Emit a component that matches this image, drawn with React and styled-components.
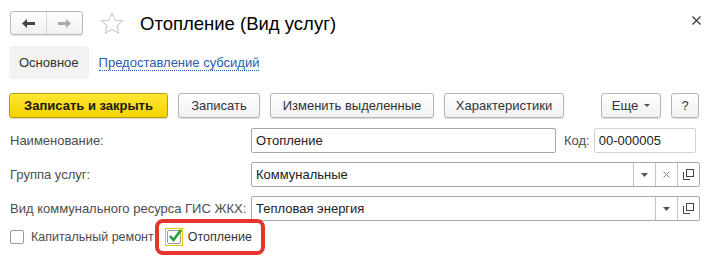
import React from 'react'
import styled, { createGlobalStyle } from 'styled-components'

const Global = createGlobalStyle`
  body {
    margin: 0;
    background: #fff;
    font-family: "Liberation Sans", Arial, sans-serif;
    font-size: 13px;
    color: #4d4d4d;
  }
`
const Page = styled.div`
  width: 717px;
  height: 277px;
  box-sizing: border-box;
  padding: 11px 17px 0 9px;
  display: flex;
  flex-direction: column;
`
const Header = styled.div`
  display: flex;
  align-items: center;
  height: 24px;
`
const NavGroup = styled.div`
  display: flex;
  width: 73px;
  height: 24px;
  box-sizing: border-box;
  border: 1px solid #b9b9b9;
  border-radius: 3px;
  background: linear-gradient(#ffffff, #f1f1f1);
  box-shadow: 0 1px 1px rgba(0, 0, 0, 0.12);
  margin-left: 1px;
`
const NavButton = styled.div`
  flex: 1;
  display: flex;
  align-items: center;
  justify-content: center;
  & + & {
    border-left: 1px solid #d6d6d6;
  }
`
const Star = styled.div`
  margin-left: 17px;
  display: flex;
`
const Title = styled.h1`
  margin: 0 0 0 16px;
  font-size: 18.5px;
  font-weight: normal;
  color: #000;
  flex: 1;
  line-height: 24px;
  padding-top: 2px;
`
const Close = styled.div`
  display: flex;
  margin-top: -6px;
  margin-right: -1px;
`
const Tabs = styled.div`
  display: flex;
  align-items: center;
  margin-top: 11px;
  height: 33px;
`
const ActiveTab = styled.div`
  height: 33px;
  padding: 0 10px;
  display: flex;
  align-items: center;
  background: #f2f2f2;
  border-radius: 3px;
  color: #333;
`
const TabLink = styled.a`
  margin-left: 10px;
  color: #2a5cad;
  text-decoration: none;
  border-bottom: 1px dotted #2a5cad;
  line-height: 14px;
  margin-top: 2px;
`
const Toolbar = styled.div`
  display: flex;
  margin-top: 14px;
  height: 25px;
`
const Button = styled.div`
  height: 25px;
  box-sizing: border-box;
  margin-right: ${(p) => p.$gap ?? 10}px;
  display: flex;
  align-items: center;
  justify-content: center;
  border-radius: 3px;
  border: 1px solid ${(p) => (p.$primary ? '#b59f00' : '#b5b5b5')};
  background: ${(p) =>
    p.$primary
      ? 'linear-gradient(#ffe733, #f5d200)'
      : 'linear-gradient(#ffffff, #f0f0f0)'};
  box-shadow: 0 1px 1px rgba(0, 0, 0, 0.15);
  color: ${(p) => (p.$primary ? '#1a1a1a' : '#333')};
  font-weight: ${(p) => (p.$primary ? 'bold' : 'normal')};
  width: ${(p) => p.$w}px;
  white-space: nowrap;
`
const Caret = styled.span`
  margin-left: 6px;
  width: 0;
  height: 0;
  border-left: 3px solid transparent;
  border-right: 3px solid transparent;
  border-top: 3px solid #555;
`
const Form = styled.div`
  margin-top: 10px;
  display: flex;
  flex-direction: column;
  gap: 9px;
`
const Row = styled.div`
  display: flex;
  align-items: center;
  height: 25px;
`
const Label = styled.div`
  width: 241px;
  flex: none;
  white-space: nowrap;
  padding-left: 1px;
`
const Field = styled.div`
  display: flex;
  align-items: stretch;
  height: 25px;
  box-sizing: border-box;
  width: ${(p) => p.$w}px;
  border: 1px solid ${(p) => (p.$light ? '#d2d2d2' : '#a8a8a8')};
  border-radius: 2px;
  background: #fff;
  color: #222;
`
const Value = styled.div`
  flex: 1;
  display: flex;
  align-items: center;
  padding-left: 4px;
`
const FieldButton = styled.div`
  width: 21px;
  display: flex;
  align-items: center;
  justify-content: center;
  border-left: 1px solid #c4c4c4;
`
const CodeLabel = styled.div`
  margin: 0 4px 0 8px;
`
const CheckRow = styled.div`
  display: flex;
  align-items: center;
  margin-top: -2px;
  height: 36px;
`
const Box = styled.div`
  width: 14px;
  height: 14px;
  box-sizing: border-box;
  border: 1px solid #9a9a9a;
  border-radius: 2px;
  background: #fff;
  margin-left: 1px;
`
const CheckLabel = styled.div`
  margin-left: ${(p) => p.$gap ?? 7}px;
  font-size: 12.5px;
`
const Highlight = styled.div`
  height: 36px;
  box-sizing: border-box;
  border: 4px solid #e2362c;
  border-radius: 8px;
  display: flex;
  align-items: center;
  padding: 0 9px 0 0;
  margin-left: 1px;
  color: #333;
`
const Focus = styled.div`
  width: 18px;
  height: 18px;
  box-sizing: border-box;
  border: 1px solid #e8c300;
  display: flex;
  align-items: center;
  justify-content: center;
  margin-left: 6px;
  margin-top: -1px;
`
const CheckedBox = styled.div`
  width: 14px;
  height: 14px;
  box-sizing: border-box;
  border: 1px solid #9a9a9a;
  border-radius: 2px;
  position: relative;
`
const Tick = styled.svg`
  position: absolute;
  left: 0px;
  top: -3px;
`

const DropIcon = () => (
  <svg width="7" height="4" viewBox="0 0 7 4">
    <path d="M0 0h7L3.5 4z" fill="#555" />
  </svg>
)
const ClearIcon = () => (
  <svg width="7" height="7" viewBox="0 0 7 7">
    <path d="M0.5 0.5l6 6M6.5 0.5l-6 6" stroke="#888" strokeWidth="1" />
  </svg>
)
const OpenIcon = () => (
  <svg width="11" height="11" viewBox="0 0 11 11">
    <rect x="3.5" y="0.5" width="7" height="7" fill="none" stroke="#444" />
    <path d="M0.5 3v7.5H7" fill="none" stroke="#444" />
  </svg>
)

export default function App() {
  return (
    <>
      <Global />
      <Page>
        <Header>
          <NavGroup>
            <NavButton>
              <svg width="13" height="9" viewBox="0 0 13 9">
                <path d="M0 4.5L5 0v3h8v3H5v3z" fill="#444" />
              </svg>
            </NavButton>
            <NavButton>
              <svg width="13" height="9" viewBox="0 0 13 9">
                <path d="M13 4.5L8 0v3H0v3h8v3z" fill="#aaa" />
              </svg>
            </NavButton>
          </NavGroup>
          <Star>
            <svg width="24" height="23" viewBox="0 0 24 23">
              <path
                d="M12 1l3.1 7.2 7.6.6-5.8 5 1.8 7.5L12 17.3 5.3 21.3l1.8-7.5-5.8-5 7.6-.6z"
                fill="none"
                stroke="#c4c4c4"
                strokeWidth="1"
              />
            </svg>
          </Star>
          <Title>Отопление (Вид услуг)</Title>
          <Close>
            <svg width="9" height="9" viewBox="0 0 9 9">
              <path d="M0.5 0.5l8 8M8.5 0.5l-8 8" stroke="#333" strokeWidth="1.1" />
            </svg>
          </Close>
        </Header>
        <Tabs>
          <ActiveTab>Основное</ActiveTab>
          <TabLink>Предоставление субсидий</TabLink>
        </Tabs>
        <Toolbar>
          <Button $primary $w={159}>Записать и закрыть</Button>
          <Button $w={82}>Записать</Button>
          <Button $w={164}>Изменить выделенные</Button>
          <Button $w={120} $gap={37}>Характеристики</Button>
          <Button $w={60}>
            Еще<Caret />
          </Button>
          <Button $w={28} $gap={0}>?</Button>
        </Toolbar>
        <Form>
          <Row>
            <Label>Наименование:</Label>
            <Field $w={305}>
              <Value>Отопление</Value>
            </Field>
            <CodeLabel>Код:</CodeLabel>
            <Field $w={102} $light>
              <Value>00-000005</Value>
            </Field>
          </Row>
          <Row>
            <Label>Группа услуг:</Label>
            <Field $w={450}>
              <Value>Коммунальные</Value>
              <FieldButton>
                <DropIcon />
              </FieldButton>
              <FieldButton>
                <ClearIcon />
              </FieldButton>
              <FieldButton>
                <OpenIcon />
              </FieldButton>
            </Field>
          </Row>
          <Row>
            <Label>Вид коммунального ресурса ГИС ЖКХ:</Label>
            <Field $w={450}>
              <Value>Тепловая энергия</Value>
              <FieldButton>
                <DropIcon />
              </FieldButton>
              <FieldButton>
                <OpenIcon />
              </FieldButton>
            </Field>
          </Row>
        </Form>
        <CheckRow>
          <Box />
          <CheckLabel>Капитальный ремонт</CheckLabel>
          <Highlight>
            <Focus>
              <CheckedBox>
                <Tick width="16" height="15" viewBox="0 0 16 15">
                  <path d="M2 8l3.5 4L13 2" fill="none" stroke="#1e9e3a" strokeWidth="2.6" />
                </Tick>
              </CheckedBox>
            </Focus>
            <CheckLabel $gap={5}>Отопление</CheckLabel>
          </Highlight>
        </CheckRow>
      </Page>
    </>
  )
}
